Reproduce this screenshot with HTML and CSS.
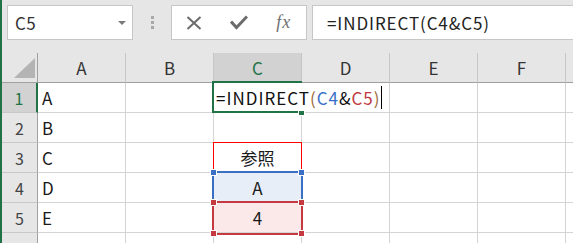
FILE: index.html
```html
<!DOCTYPE html>
<html lang="ja">
<head>
<meta charset="utf-8">
<link rel="stylesheet" href="styles.css">
</head>
<body>
<div class="app">
  <div class="toolbar">
    <div class="namebox"><span>C5</span><span class="caret"></span></div>
    <div class="grip"><i></i><i></i><i></i></div>
    <div class="fnbox">
      <div class="btn"><svg width="16" height="14" viewBox="0 0 16 14"><path d="M1.5 1 L14.5 13 M14.5 1 L1.5 13" stroke="#6b6b6b" stroke-width="2" fill="none"/></svg></div>
      <div class="btn"><svg width="18" height="15" viewBox="0 0 18 15"><path d="M1 6.5 L6.5 12.5 L17 1.5" fill="none" stroke="#6b6b6b" stroke-width="3"/></svg></div>
      <div class="btn fx">fx</div>
    </div>
    <div class="formula">=INDIRECT(C4&amp;C5)</div>
  </div>
  <div class="sheet">
    <div class="row head">
      <div class="rh corner"><span class="tri"></span></div>
      <div class="ch">A</div>
      <div class="ch">B</div>
      <div class="ch sel">C</div>
      <div class="ch">D</div>
      <div class="ch">E</div>
      <div class="ch">F</div>
      <div class="ch"></div>
    </div>
    <div class="row">
      <div class="rh sel">1</div>
      <div class="c">A</div>
      <div class="c"></div>
      <div class="c">
        <div class="active"></div>
        <div class="fill"></div>
        <div class="edit">=INDIRECT<span class="par">(</span><span class="rb">C4</span>&amp;<span class="rr">C5</span><span class="par">)</span><span class="cursor"></span></div>
      </div>
      <div class="c"></div>
      <div class="c"></div>
      <div class="c"></div>
      <div class="c"></div>
    </div>
    <div class="row">
      <div class="rh">2</div>
      <div class="c">B</div>
      <div class="c"></div><div class="c"></div><div class="c"></div><div class="c"></div><div class="c"></div><div class="c"></div>
    </div>
    <div class="row">
      <div class="rh">3</div>
      <div class="c">C</div>
      <div class="c"></div>
      <div class="c ctr"><div class="box-red1"></div>参照</div>
      <div class="c"></div><div class="c"></div><div class="c"></div><div class="c"></div>
    </div>
    <div class="row">
      <div class="rh">4</div>
      <div class="c">D</div>
      <div class="c"></div>
      <div class="c ctr fill-blue"><div class="hl hl-blue"><i class="h tl"></i><i class="h tr"></i></div><span class="val">A</span></div>
      <div class="c"></div><div class="c"></div><div class="c"></div><div class="c"></div>
    </div>
    <div class="row">
      <div class="rh">5</div>
      <div class="c">E</div>
      <div class="c"></div>
      <div class="c ctr fill-red"><div class="hl hl-red"><i class="h tl"></i><i class="h tr"></i><i class="h bl"></i><i class="h br"></i></div><span class="val">4</span></div>
      <div class="c"></div><div class="c"></div><div class="c"></div><div class="c"></div>
    </div>
    <div class="row">
      <div class="rh">6</div>
      <div class="c"></div><div class="c"></div><div class="c"></div><div class="c"></div><div class="c"></div><div class="c"></div><div class="c"></div>
    </div>
  </div>
</div>
</body>
</html>
```

FILE: styles.css
```css
* { box-sizing: border-box; margin: 0; padding: 0; }
html, body { width: 573px; height: 243px; overflow: hidden; }
body {
  background: #e6e6e6;
  font-family: "Noto Sans CJK JP", "Noto Sans", sans-serif;
  color: #1a1a1a;
}
.app {
  height: 243px;
  border-left: 2px solid #217346;
  overflow: hidden;
}
.toolbar {
  display: flex;
  align-items: flex-start;
  height: 53px;
  padding: 5px 0 0 5px;
}
.namebox {
  width: 126px;
  height: 35px;
  flex: none;
  background: #fff;
  border: 1px solid #c6c6c6;
  display: flex;
  align-items: center;
  justify-content: space-between;
  padding: 0 6px 0 7px;
  font-size: 17px;
  letter-spacing: 0.5px;
  color: #333;
}
.caret {
  width: 0; height: 0;
  border-left: 4px solid transparent;
  border-right: 4px solid transparent;
  border-top: 4px solid #7a7a7a;
}
.grip {
  width: 38px;
  height: 35px;
  flex: none;
  display: flex;
  flex-direction: column;
  align-items: center;
  justify-content: center;
  gap: 2px;
}
.grip i { display: block; width: 3px; height: 3px; background: #a8a8a8; }
.fnbox {
  width: 136px;
  height: 35px;
  flex: none;
  background: #fff;
  border: 1px solid #c6c6c6;
  display: flex;
}
.fnbox .btn {
  width: 45px;
  display: flex;
  align-items: center;
  justify-content: center;
}
.fnbox .fx {
  font-family: "Liberation Serif", serif;
  font-style: italic;
  font-size: 18px;
  letter-spacing: 1px;
  color: #707070;
}
.formula {
  flex: 1;
  height: 35px;
  margin-left: 5px;
  margin-right: -10px;
  background: #fff;
  border: 1px solid #c6c6c6;
  padding-left: 14px;
  display: flex;
  align-items: center;
  font-size: 17px;
  letter-spacing: 0.9px;
  color: #222;
  white-space: nowrap;
}
.sheet { background: #fff; }
.row { display: flex; height: 30px; }
.rh {
  width: 36px;
  flex: none;
  background: #e6e6e6;
  border-right: 1px solid #a0a0a0;
  border-bottom: 1px solid #c8c8c8;
  display: flex;
  align-items: center;
  justify-content: center;
  font-size: 16px;
  color: #444;
}
.rh.sel {
  background: #d2d2d2;
  color: #217346;
  border-right: 2px solid #217346;
}
.corner {
  align-items: flex-end;
  justify-content: flex-end;
  padding: 0 2px 4px 0;
  border-bottom-color: #a0a0a0;
}
.tri {
  width: 0; height: 0;
  border-style: solid;
  border-width: 0 0 20px 21px;
  border-color: transparent transparent #b4b4b4 transparent;
}
.ch {
  width: 88px;
  flex: none;
  background: #e6e6e6;
  border-right: 1px solid #c6c6c6;
  border-bottom: 1px solid #a0a0a0;
  display: flex;
  align-items: center;
  justify-content: center;
  font-size: 17px;
  color: #333;
}
.ch.sel { background: #d2d2d2; color: #217346; }
.c {
  width: 88px;
  flex: none;
  position: relative;
  border-right: 1px solid #d4d4d4;
  border-bottom: 1px solid #d4d4d4;
  display: flex;
  align-items: center;
  padding-left: 4px;
  font-size: 17px;
  white-space: nowrap;
}
.c.ctr { justify-content: center; padding-left: 0; }
.active {
  position: absolute;
  left: -2px; top: -2px;
  width: 90px; height: 32px;
  border: 2px solid #217346;
  border-right: none;
  z-index: 3;
}
.fill {
  position: absolute;
  left: 84px; top: 27px;
  width: 7px; height: 6px;
  background: #217346;
  border: 1px solid #fff;
  z-index: 4;
}
.edit {
  position: absolute;
  left: 0; top: 0;
  height: 28px;
  padding: 0 2px 0 2px;
  background: #fff;
  display: flex;
  align-items: center;
  z-index: 2;
  letter-spacing: 1px;
  color: #111;
}
.edit .par { color: #9c6a3c; }
.edit .rb { color: #3a6fc6; }
.edit .rr { color: #c0393f; }
.cursor {
  display: inline-block;
  width: 1px;
  height: 23px;
  margin-left: 0;
  background: #000;
}
.box-red1 {
  position: absolute;
  left: -1px; top: -1px;
  width: 89px; height: 31px;
  border: 1px solid #ff0000;
}
.fill-blue { background: #e8eef8; }
.fill-red { background: #fbe9ea; }
.val { position: relative; z-index: 1; }
.hl {
  position: absolute;
  left: -2px; top: -2px;
  width: 91px;
  border: 2px solid;
  z-index: 2;
}
.hl-blue { height: 32px; border-color: #3a6fc6; color: #3a6fc6; }
.hl-red { height: 34px; border-color: #c53a40; color: #c53a40; z-index: 3; }
.h {
  position: absolute;
  display: block;
  width: 7px; height: 7px;
  background: currentColor;
  border: 1px solid #fff;
}
.h.tl { left: -4px; top: -4px; }
.h.tr { right: -4px; top: -4px; }
.h.bl { left: -4px; bottom: -4px; }
.h.br { right: -4px; bottom: -4px; }
```
